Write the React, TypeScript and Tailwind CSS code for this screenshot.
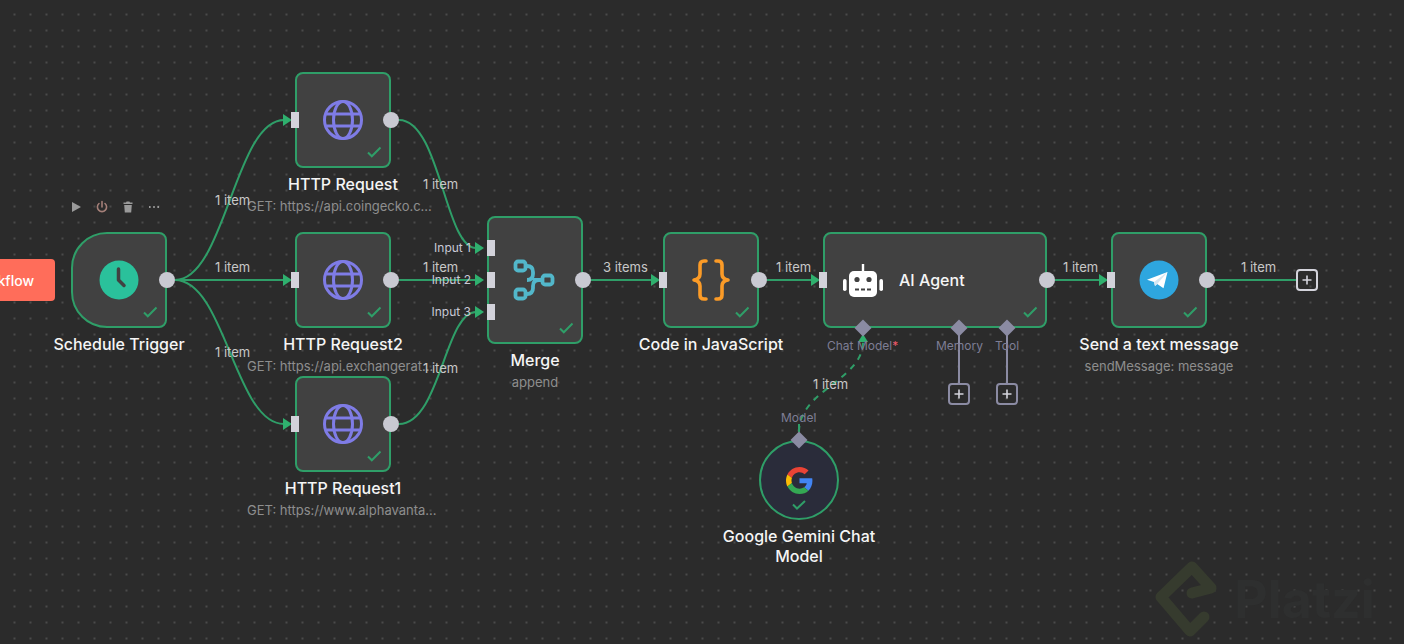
import type { ReactNode } from 'react';

const GREEN = '#2f9e68';

const edges = [
  'M175,280 C225,280 235,120 284,120',
  'M175,280 L284,280',
  'M175,280 C225,280 235,424 284,424',
  'M399,120 C440,120 445,248 476,248',
  'M399,280 L476,280',
  'M399,424 C440,424 445,312 476,312',
  'M591,280 L652,280',
  'M767,280 L812,280',
  'M1055,280 L1100,280',
  'M1215,280 L1296,280',
];

const arrows = [
  '283,274 292,280 283,286',
  '283,114 292,120 283,126',
  '283,418 292,424 283,430',
  '475,242 484,248 475,254',
  '475,274 484,280 475,286',
  '475,306 484,312 475,318',
  '651,274 660,280 651,286',
  '811,274 820,280 811,286',
  '1099,274 1108,280 1099,286',
];

const edgeLabels = [
  { text: '1 item', pos: 'left-[215px] top-[191px]' },
  { text: '1 item', pos: 'left-[215px] top-[258px]' },
  { text: '1 item', pos: 'left-[215px] top-[343px]' },
  { text: '1 item', pos: 'left-[423px] top-[175px]' },
  { text: '1 item', pos: 'left-[423px] top-[258px]' },
  { text: '1 item', pos: 'left-[423px] top-[359px]' },
  { text: '3 items', pos: 'left-[603px] top-[258px]' },
  { text: '1 item', pos: 'left-[776px] top-[258px]' },
  { text: '1 item', pos: 'left-[1063px] top-[258px]' },
  { text: '1 item', pos: 'left-[1241px] top-[258px]' },
  { text: '1 item', pos: 'left-[813px] top-[375px]' },
];

const Check = () => (
  <svg width="16" height="12" viewBox="0 0 16 12" fill="none" className="absolute right-[7px] bottom-[8px]">
    <path d="M2 6.5 L5.8 10.3 L14.5 1.5" stroke={GREEN} strokeWidth="2" />
  </svg>
);

const Globe = () => (
  <svg width="40" height="40" viewBox="0 0 40 40" fill="none" stroke="#7f7ce6" strokeWidth="3">
    <circle cx="20" cy="20" r="18.5" />
    <ellipse cx="20" cy="20" rx="9.5" ry="18.5" />
    <path d="M3.5 14 H36.5 M3.5 26 H36.5" />
  </svg>
);

const Clock = () => (
  <svg width="40" height="40" viewBox="0 0 40 40" fill="none">
    <circle cx="20" cy="20" r="19.5" fill="#2ac19b" />
    <path d="M19.5 9 V20 L25 25.5" stroke="#414141" strokeWidth="3.5" strokeLinecap="round" strokeLinejoin="round" />
  </svg>
);

const MergeIcon = () => (
  <svg width="44" height="44" viewBox="0 0 44 44" fill="none" stroke="#52b7ca" strokeWidth="3.8">
    <rect x="2.5" y="3.5" width="10" height="9" rx="2.5" />
    <rect x="2.5" y="31.5" width="10" height="9" rx="2.5" />
    <rect x="29.5" y="17.5" width="10" height="9" rx="2.5" />
    <path d="M12.5 8 H14 Q20 8 20 14 V16 Q20 22 14 22 M12.5 36 H14 Q20 36 20 30 V28 Q20 22 26 22 H29.5 M20 22 H26" />
  </svg>
);

const Braces = () => (
  <svg width="40" height="42" viewBox="0 0 40 42" fill="none" stroke="#fb9b27" strokeWidth="3.6" strokeLinecap="round" strokeLinejoin="round">
    <path d="M15 2 H13 Q9 2 9 6 V15 Q9 20 3 21 Q9 22 9 27 V36 Q9 40 13 40 H15" />
    <path d="M25 2 H27 Q31 2 31 6 V15 Q31 20 37 21 Q31 22 31 27 V36 Q31 40 27 40 H25" />
  </svg>
);

const Robot = () => (
  <svg width="40" height="33" viewBox="0 0 40 33" className="shrink-0">
    <rect x="18.8" y="0" width="2.4" height="8" fill="#fff" />
    <rect x="6" y="7" width="28" height="26" rx="5" fill="#fff" />
    <rect x="0" y="15" width="3.6" height="12" rx="1.8" fill="#fff" />
    <rect x="36.4" y="15" width="3.6" height="12" rx="1.8" fill="#fff" />
    <circle cx="14" cy="15.5" r="2.6" fill="#414141" />
    <circle cx="26" cy="15.5" r="2.6" fill="#414141" />
    <path d="M12 25.5 H16 M18 25.5 H22 M24 25.5 H28" stroke="#414141" strokeWidth="2" />
  </svg>
);

const Telegram = () => (
  <svg width="40" height="40" viewBox="0 0 40 40">
    <circle cx="20" cy="20" r="19.5" fill="#2ea6df" />
    <path d="M8 19.8 L28.5 12 L24.5 28.2 L18.2 24 L16 26 L15 22 Z" fill="#fff" />
    <path d="M15 22 L28.5 12 L18.2 24 L16 26 Z" fill="#d3e6f2" />
  </svg>
);

const GoogleG = () => (
  <svg width="27" height="27" viewBox="0 0 48 48">
    <path fill="#EA4335" d="M24 9.5c3.54 0 6.71 1.22 9.21 3.6l6.85-6.85C35.9 2.38 30.47 0 24 0 14.62 0 6.51 5.38 2.56 13.22l7.98 6.19C12.43 13.72 17.74 9.5 24 9.5z" />
    <path fill="#4285F4" d="M46.98 24.55c0-1.57-.15-3.09-.38-4.55H24v9.02h12.94c-.58 2.96-2.26 5.48-4.78 7.18l7.73 6c4.51-4.18 7.09-10.36 7.09-17.65z" />
    <path fill="#FBBC05" d="M10.53 28.59c-.48-1.45-.76-2.99-.76-4.59s.27-3.14.76-4.59l-7.98-6.19C.92 16.46 0 20.12 0 24c0 3.88.92 7.54 2.56 10.78l7.97-6.19z" />
    <path fill="#34A853" d="M24 48c6.48 0 11.93-2.13 15.89-5.81l-7.73-6c-2.15 1.45-4.92 2.3-8.16 2.3-6.26 0-11.57-4.22-13.47-9.91l-7.98 6.19C6.51 42.62 14.62 48 24 48z" />
  </svg>
);

const InPort = ({ pos = 'top-[40px]' }: { pos?: string }) => (
  <div className={`absolute -left-[4px] w-[8px] h-[16px] bg-[#d2d2da] ${pos}`} />
);

const OutPort = () => (
  <div className="absolute -right-[8px] top-1/2 -mt-[8px] w-[16px] h-[16px] rounded-full bg-[#c9c9d2]" />
);

const Caption = ({ title, sub, subBox = '' }: { title: string; sub?: string; subBox?: string }) => (
  <div className="absolute top-full left-1/2 -translate-x-1/2 mt-[6px] flex flex-col items-center whitespace-nowrap">
    <span className="text-[16px] leading-[20px] font-medium text-[#f5f5f5]">{title}</span>
    {sub && <span className={`mt-[4px] text-[13px] leading-[16px] text-[#8e8e8e] ${subBox}`}>{sub}</span>}
  </div>
);

interface NodeProps {
  pos: string;
  shape?: string;
  title: string;
  sub?: string;
  subBox?: string;
  input?: boolean;
  children: ReactNode;
}

const FlowNode = ({ pos, shape = 'w-[96px] h-[96px] rounded-lg', title, sub, subBox, input = true, children }: NodeProps) => (
  <div className={`absolute ${pos}`}>
    <div className={`relative flex items-center justify-center border-[2px] border-[#2f9e68] bg-[#414141] ${shape}`}>
      {children}
      <Check />
    </div>
    {input && <InPort />}
    <OutPort />
    <Caption title={title} sub={sub} subBox={subBox} />
  </div>
);

const Diamond = ({ pos }: { pos: string }) => (
  <div className={`absolute w-[12px] h-[12px] rotate-45 bg-[#8b8ba3] ${pos}`} />
);

const PlusBox = ({ pos, tone }: { pos: string; tone: string }) => (
  <div className={`absolute w-[22px] h-[22px] rounded-[4px] border-[2px] flex items-center justify-center ${tone} ${pos}`}>
    <svg width="10" height="10" viewBox="0 0 10 10">
      <path d="M5 0.5 V9.5 M0.5 5 H9.5" stroke="#d4d4dc" strokeWidth="1.6" />
    </svg>
  </div>
);

const SlotLabel = ({ pos, children }: { pos: string; children: ReactNode }) => (
  <span className={`absolute text-[12px] leading-[16px] text-[#7e7e95] whitespace-nowrap ${pos}`}>{children}</span>
);

const InputLabel = ({ pos, text }: { pos: string; text: string }) => (
  <span className={`absolute right-[933px] text-[12px] leading-[16px] text-[#c9c9d6] whitespace-nowrap ${pos}`}>{text}</span>
);

export default function App() {
  return (
    <div className="relative w-[1404px] h-[644px] overflow-hidden bg-[#2b2b2b] bg-[radial-gradient(#8f8f8f_0.5px,transparent_0.8px)] bg-[length:16px_16px] bg-[position:6.5px_6.5px] font-['Inter',sans-serif]">
      {/* watermark */}
      <svg width="80" height="90" viewBox="0 0 80 90" fill="none" className="absolute left-[1150px] top-[555px]">
        <path d="M42 38 L61 33 L42 12 L11 42 L40 76 L54 62" stroke="#363b2e" strokeWidth="11" strokeLinejoin="round" strokeLinecap="round" />
      </svg>
      <span className="absolute left-[1234px] top-[570px] text-[52px] leading-[60px] font-bold text-[#2e2f2f]">Platzi</span>

      {/* edges */}
      <svg width="1404" height="644" viewBox="0 0 1404 644" fill="none" className="absolute inset-0">
        {edges.map((d) => (
          <path key={d} d={d} stroke={GREEN} strokeWidth="2" />
        ))}
        <path d="M799,432 C799,390 863,380 863,342" stroke={GREEN} strokeWidth="2" strokeDasharray="6 6" />
        <path d="M799,432 V424" stroke={GREEN} strokeWidth="2" />
        <path d="M959,334 V384 M1007,334 V384" stroke="#8b8ba3" strokeWidth="2" />
        {arrows.map((p) => (
          <polygon key={p} points={p} fill="#2fb06e" />
        ))}
        <polygon points="858,342 863,334 868,342" fill="#2fb06e" />
      </svg>

      {/* execute button, runs off the left edge */}
      <div className="absolute right-[1349px] top-[259px] h-[42px] px-[21px] flex items-center rounded-[4px] bg-[#ff6d5a] text-white text-[14px] font-medium whitespace-nowrap">
        Execute workflow
      </div>

      {/* toolbar above the trigger */}
      <div className="absolute left-[70px] top-[200px] flex items-center gap-[14px]">
        <svg width="12" height="14" viewBox="0 0 12 14"><path d="M2 2 L11 7 L2 12 Z" fill="#9a9a9a" /></svg>
        <svg width="12" height="14" viewBox="0 0 12 14" fill="none"><path d="M6 1.5 V7 M3 3.5 A4.6 4.6 0 1 0 9 3.5" stroke="#a47f78" strokeWidth="1.6" strokeLinecap="round" /></svg>
        <svg width="12" height="14" viewBox="0 0 12 14"><path d="M1.5 2.5 H4 L4.6 1.5 H7.4 L8 2.5 H10.5 V4 H1.5 Z M2.2 5 H9.8 L9.2 12.5 H2.8 Z" fill="#9a9a9a" /></svg>
        <svg width="12" height="14" viewBox="0 0 12 14"><path d="M1 7 H2.6 M5.2 7 H6.8 M9.4 7 H11" stroke="#9a9a9a" strokeWidth="2" /></svg>
      </div>

      <FlowNode pos="left-[71px] top-[232px]" shape="w-[96px] h-[96px] rounded-l-[36px] rounded-r-lg" title="Schedule Trigger" input={false}>
        <Clock />
      </FlowNode>
      <FlowNode pos="left-[295px] top-[72px]" title="HTTP Request" sub="GET: https://api.coingecko.c..." subBox="w-[192px]">
        <Globe />
      </FlowNode>
      <FlowNode pos="left-[295px] top-[232px]" title="HTTP Request2" sub="GET: https://api.exchangerat..." subBox="w-[192px]">
        <Globe />
      </FlowNode>
      <FlowNode pos="left-[295px] top-[376px]" title="HTTP Request1" sub="GET: https://www.alphavanta..." subBox="w-[192px]">
        <Globe />
      </FlowNode>

      <FlowNode pos="left-[487px] top-[216px]" shape="w-[96px] h-[128px] rounded-lg" title="Merge" sub="append" input={false}>
        <MergeIcon />
      </FlowNode>
      <InPort pos="left-[487px] top-[240px]" />
      <InPort pos="left-[487px] top-[272px]" />
      <InPort pos="left-[487px] top-[304px]" />
      <InputLabel pos="top-[240px]" text="Input 1" />
      <InputLabel pos="top-[272px]" text="Input 2" />
      <InputLabel pos="top-[304px]" text="Input 3" />

      <FlowNode pos="left-[663px] top-[232px]" title="Code in JavaScript">
        <Braces />
      </FlowNode>

      <div className="absolute left-[823px] top-[232px]">
        <div className="relative w-[224px] h-[96px] rounded-lg border-[2px] border-[#2f9e68] bg-[#414141] flex items-center gap-[16px] pl-[18px]">
          <Robot />
          <span className="text-[16px] font-medium text-[#f5f5f5]">AI Agent</span>
          <Check />
        </div>
        <InPort />
        <OutPort />
      </div>

      <FlowNode pos="left-[1111px] top-[232px]" title="Send a text message" sub="sendMessage: message">
        <Telegram />
      </FlowNode>

      <PlusBox pos="left-[1296px] top-[269px]" tone="border-[#d4d4dc]" />

      <Diamond pos="left-[857px] top-[322px]" />
      <Diamond pos="left-[953px] top-[322px]" />
      <Diamond pos="left-[1001px] top-[322px]" />
      <SlotLabel pos="left-[827px] top-[338px]">
        Chat Model<span className="text-[#f05a6a]">*</span>
      </SlotLabel>
      <SlotLabel pos="left-[936px] top-[338px]">Memory</SlotLabel>
      <SlotLabel pos="left-[995px] top-[338px]">Tool</SlotLabel>
      <PlusBox pos="left-[948px] top-[383px]" tone="border-[#8b8ba3]" />
      <PlusBox pos="left-[996px] top-[383px]" tone="border-[#8b8ba3]" />

      {/* gemini sub node */}
      <SlotLabel pos="left-[781px] top-[410px]">Model</SlotLabel>
      <div className="absolute left-[759px] top-[440px] w-[80px] h-[80px]">
        <div className="relative w-full h-full rounded-full border-[2px] border-[#2f9e68] bg-[#2a2c3a] flex items-center justify-center">
          <GoogleG />
          <svg width="14" height="10" viewBox="0 0 14 10" fill="none" className="absolute left-[31px] bottom-[8px]">
            <path d="M1 4.5 L5 8.5 L13 1" stroke={GREEN} strokeWidth="2" />
          </svg>
        </div>
        <div className="absolute top-full left-1/2 -translate-x-1/2 mt-[6px] w-[170px] text-center text-[16px] leading-[20px] font-medium text-[#f5f5f5]">
          Google Gemini Chat Model
        </div>
      </div>
      <Diamond pos="left-[793px] top-[434px]" />

      {edgeLabels.map((l) => (
        <span key={l.pos} className={`absolute text-[13px] leading-[18px] text-[#c8c8c8] whitespace-nowrap ${l.pos}`}>
          {l.text}
        </span>
      ))}
    </div>
  );
}
